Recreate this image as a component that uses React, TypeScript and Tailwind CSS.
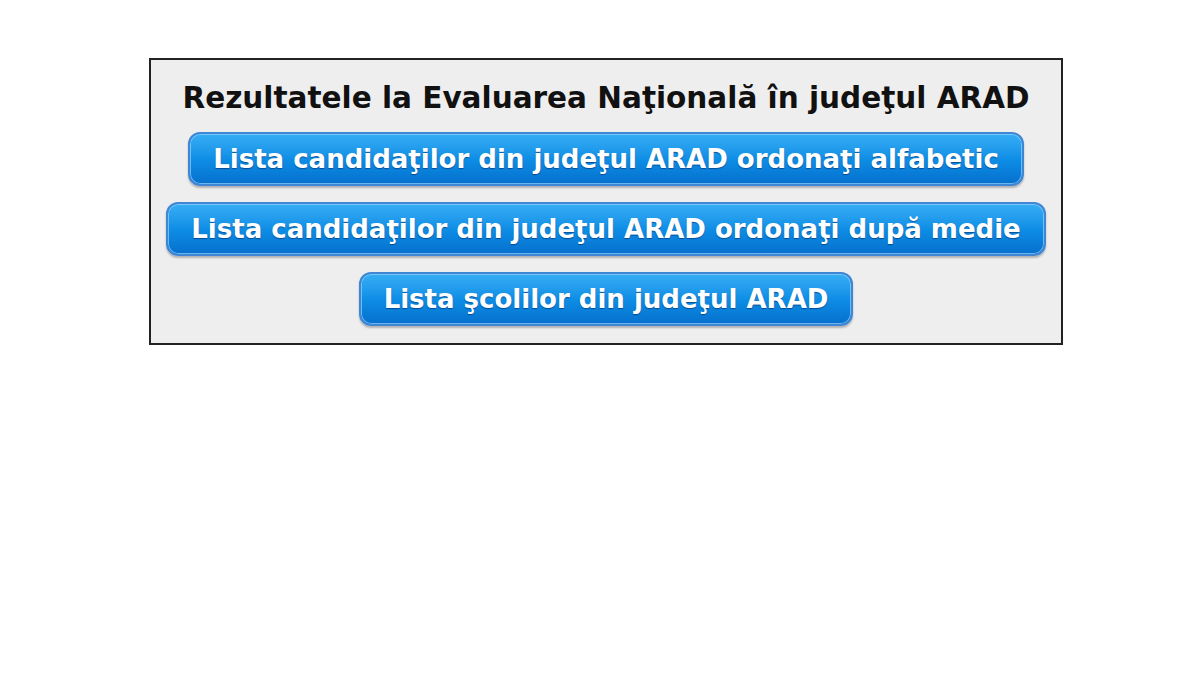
const COUNTY = "ARAD";

const links = [
  `Lista candidaţilor din judeţul ${COUNTY} ordonaţi alfabetic`,
  `Lista candidaţilor din judeţul ${COUNTY} ordonaţi după medie`,
  `Lista şcolilor din judeţul ${COUNTY}`,
];

function BlueButton({ label }: { label: string }) {
  return (
    <a
      href="#"
      className="inline-block rounded-[12px] border-2 border-[#3f86d4] bg-gradient-to-b from-[#36aef4] via-[#0e8ee6] to-[#0670cd] px-[23px] py-[10px] text-[26px] leading-[30px] font-bold whitespace-nowrap text-white no-underline shadow-[inset_0_0_0_1px_rgba(150,210,255,0.7),0_2px_2px_rgba(0,0,0,0.25)] [text-shadow:0_1px_1px_rgba(0,40,100,0.6)]"
    >
      {label}
    </a>
  );
}

export default function App() {
  return (
    <div className="min-h-[675px] w-full bg-white pt-[58px] font-['DejaVu_Sans',Verdana,sans-serif]">
      <div className="ml-[149px] flex w-[914px] flex-col items-center gap-[16px] border-2 border-[#222] bg-[#eeeeee] pt-[21px] pb-[17px]">
        <h1 className="text-[29.5px] leading-[35px] font-bold whitespace-nowrap text-[#111]">
          Rezultatele la Evaluarea Naţională în judeţul {COUNTY}
        </h1>
        {links.map((l) => (
          <BlueButton key={l} label={l} />
        ))}
      </div>
    </div>
  );
}
